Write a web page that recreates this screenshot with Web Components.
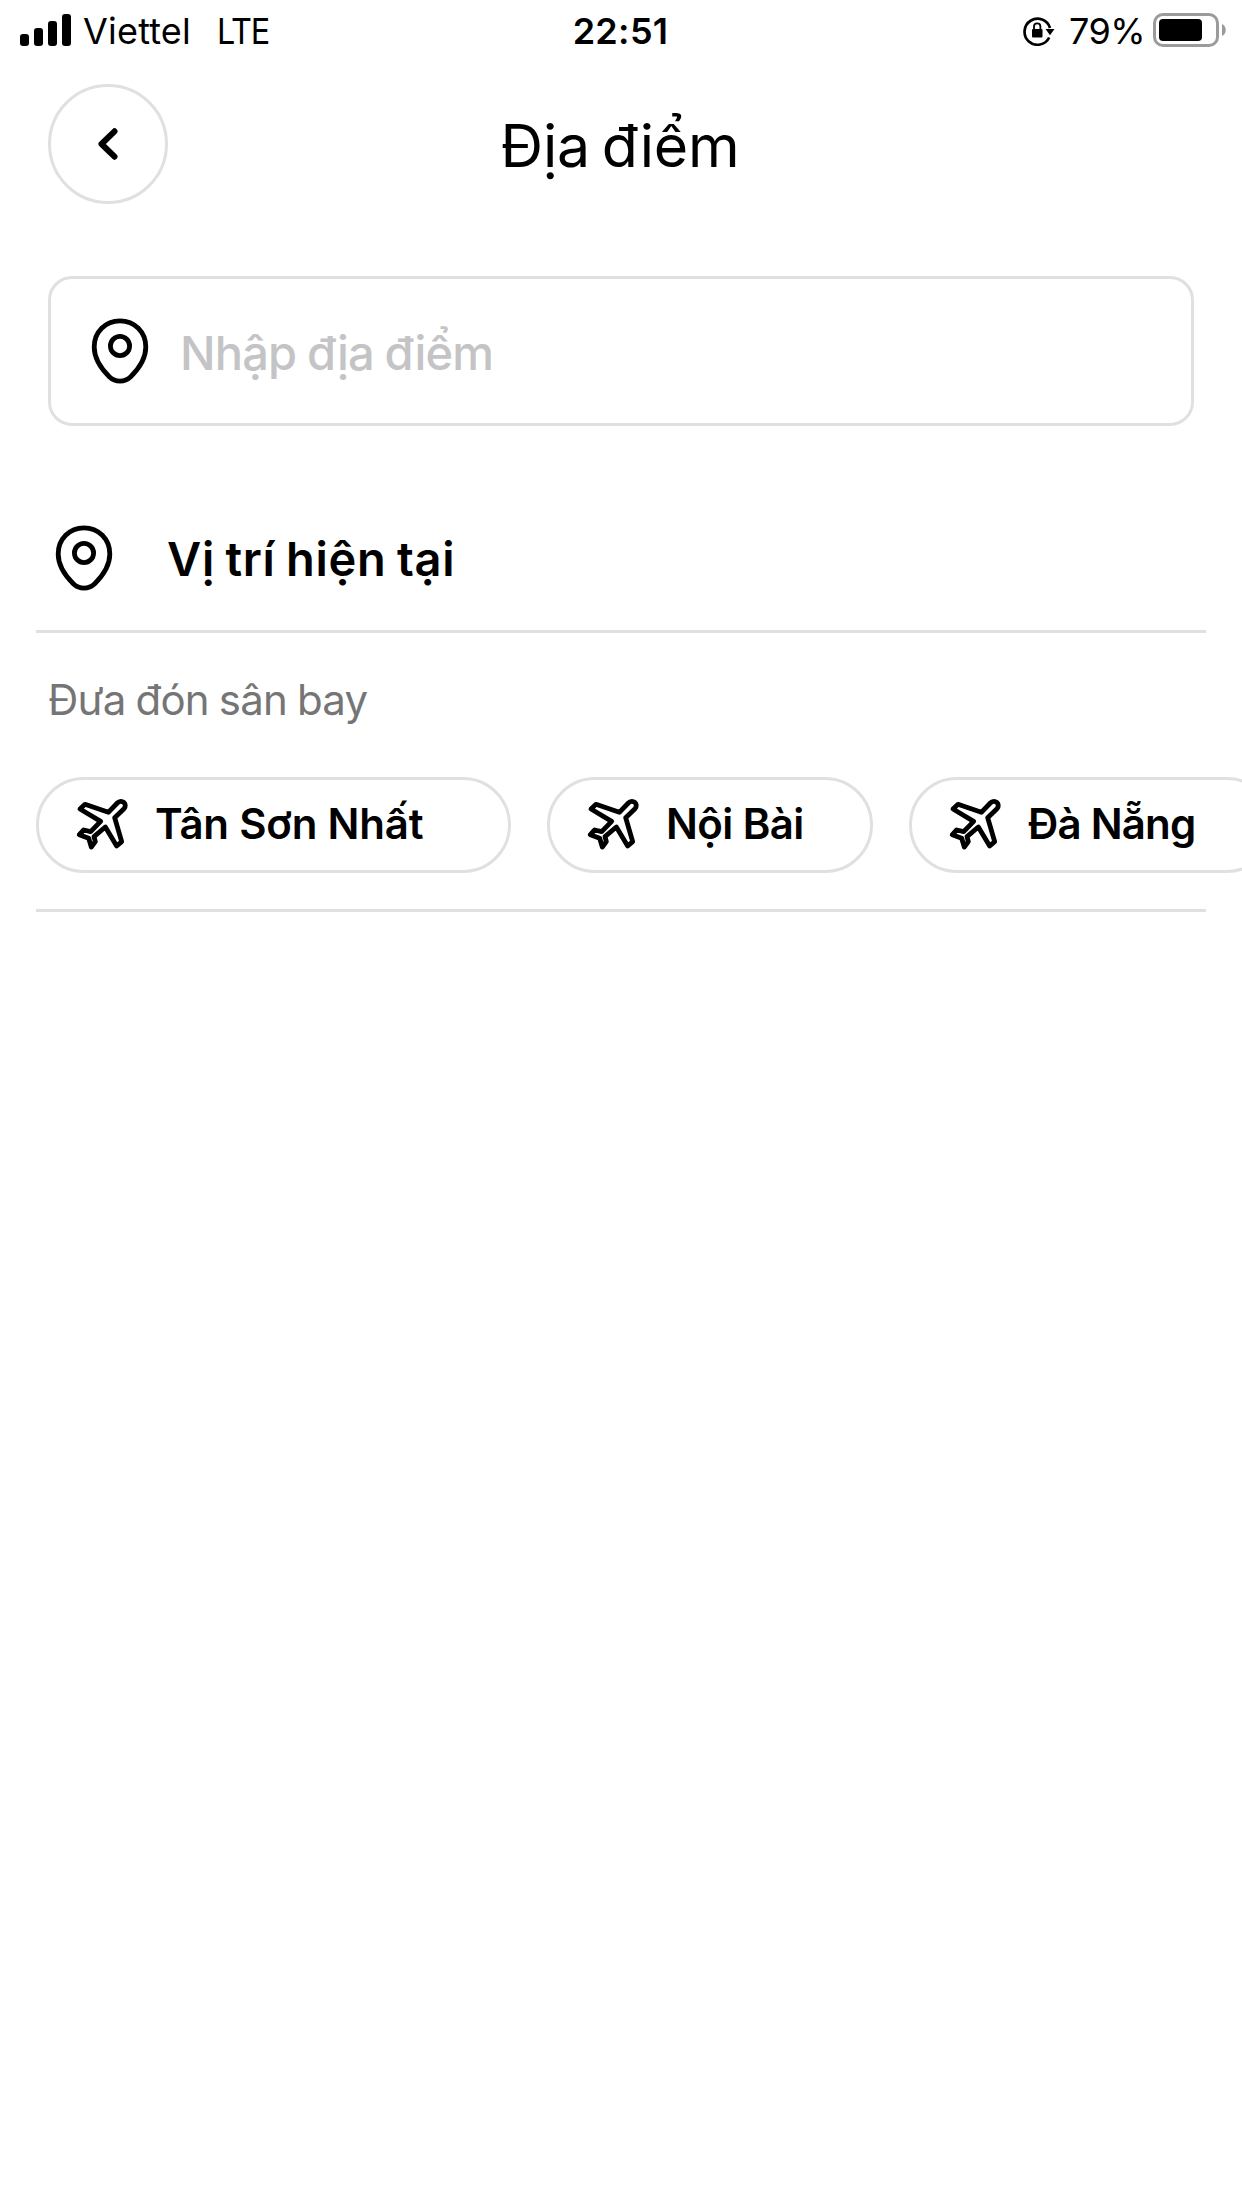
<!DOCTYPE html>
<html lang="vi">
<head>
<meta charset="utf-8">
<title>Địa điểm</title>
<style>
body{margin:0;background:#fff;color:#000;font-family:Inter,"Noto Sans",sans-serif;overflow:hidden}
</style>
</head>
<body>
<location-page></location-page>
<script>
const define=(name,html)=>customElements.define(name,class extends HTMLElement{
  constructor(){super();this.attachShadow({mode:'open'}).innerHTML=html;}
});

define('status-bar',`<style>
:host{display:grid;grid-template-columns:1fr auto 1fr;align-items:center;height:60px;font-size:36px;line-height:44px;box-sizing:border-box;padding:0 16px 0 20px}
.l,.r{display:flex;align-items:center;white-space:pre}
.r{justify-content:flex-end}
svg{display:block;flex:none}
.c{margin-left:12px;letter-spacing:.2px}
.n{margin-left:26px;letter-spacing:-1.3px;transform:scaleX(.9);transform-origin:0 50%}
.t{font-weight:600;letter-spacing:.3px;margin-right:5px}
.p{margin-left:14px;letter-spacing:-.6px}
.b{margin-left:8px}
.k{margin-top:2px}
span{position:relative;top:1px}
</style>
<div class="l"><svg width="51" height="32" viewBox="0 0 51 32"><rect y="20" width="9" height="12" rx="3"/><rect x="14" y="14" width="9" height="18" rx="3"/><rect x="28" y="7" width="9" height="25" rx="3"/><rect x="42" width="9" height="32" rx="3"/></svg><span class="c">Viettel</span><span class="n">LTE</span></div>
<span class="t">22:51</span>
<div class="r"><svg class="k" width="32" height="30" viewBox="0 0 32 30"><path d="M26.2 21.5A13 13 0 1 1 27 12" fill="none" stroke="#000" stroke-width="2.700"/><path d="M22.500 13H31.500L27 19.300Z"/><rect x="9" y="13" width="10.500" height="8.500" rx="1"/><path d="M11 13V10.500a3.200 3.200 0 0 1 6.400 0V13" fill="none" stroke="#000" stroke-width="1.800"/></svg><span class="p">79%</span>
<svg class="b" width="73" height="34" viewBox="0 0 73 34"><rect x="1.500" y="1.500" width="63" height="31" rx="8.500" fill="none" stroke="#9b9b9b" stroke-width="3"/><rect x="6" y="6" width="43" height="22" rx="4"/><path d="M69 11c5 2 5 10 0 12z" fill="#9b9b9b"/></svg></div>`);

define('back-button',`<style>
:host{display:flex;width:120px;height:120px;box-sizing:border-box;border:3px solid #e0e0e0;border-radius:50%;align-items:center;justify-content:center}
</style><svg width="24" height="36" viewBox="0 0 24 36"><path d="M18.500 5.300 5.500 18 18.500 30.700" fill="none" stroke="#000" stroke-width="6" stroke-linecap="round" stroke-linejoin="round"/></svg>`);

define('nav-header',`<style>
:host{display:grid;grid-template-columns:120px 1fr 120px;align-items:center;padding:24px 48px 0;height:120px}
h1{margin:0;text-align:center;font-weight:430;font-size:59px;line-height:72px;letter-spacing:-.2px;word-spacing:-4.5px}
h1 span{position:relative;top:2px;left:-1px}
</style><back-button></back-button><h1><span><slot></slot></span></h1>`);

define('pin-icon',`<style>:host{display:block;width:60px;height:70px}svg{display:block}</style>
<svg width="60" height="70" viewBox="0 0 60 70" fill="none" stroke="#000" stroke-width="4.8"><path d="M30 4.800C15.500 4.800 4.200 16 4.200 31C4.200 42.500 11 52.500 19.300 60.700C25.500 66.600 34.500 66.600 40.700 60.700C49 52.500 55.800 42.500 55.800 31C55.800 16 44.500 4.800 30 4.800Z"/><circle cx="30" cy="30" r="9.600"/></svg>`);

define('plane-icon',`<style>:host{display:block;width:60px;height:60px}svg{display:block}</style>
<svg width="60" height="60" viewBox="162 108 180 180" fill="none" stroke="#000" stroke-width="14.5" stroke-linejoin="round"><path d="M180 150 195 136 265 160 292 132C305 119 324 135 312 149L284 176 305 248 290 261 256 204 222 233 226 248 214 264 206 238 178 227 191 213 212 218 242 187Z"/></svg>`);

define('search-field',`<style>
:host{display:flex;align-items:center;height:150px;box-sizing:border-box;border:3px solid #e0e0e0;border-radius:24px;margin:72px 48px 0;padding-left:39px}
span{margin-left:30px;color:#c4c4c6;font-weight:450;font-size:47px;line-height:60px;letter-spacing:-.8px;word-spacing:-1px;position:relative;top:2px}
</style><pin-icon></pin-icon><span><slot></slot></span>`);

define('current-location',`<style>
:host{display:flex;align-items:center;height:204px;box-sizing:border-box;margin:0 36px;padding:60px 0 0 18px}
span{margin-left:53px;font-weight:600;font-size:47px;line-height:60px;letter-spacing:.7px;word-spacing:-2px;position:relative;top:1px}
</style><pin-icon></pin-icon><span><slot></slot></span>`);

define('divider-line',`<style>:host{display:block;height:3px;margin:0 36px;background:#e0e0e0}</style>`);

define('section-label',`<style>
:host{display:block;margin:40px 48px 0;height:104px;font-size:42px;line-height:54px;color:#757575;letter-spacing:-.8px;word-spacing:-1px}
</style><span><slot></slot></span>`);

define('airport-chip',`<style>
:host{display:flex;flex:none;align-items:center;height:96px;box-sizing:border-box;border:3px solid #e0e0e0;border-radius:48px;padding-left:35px;width:var(--w)}
span{margin-left:21px;padding-bottom:2px;font-weight:600;font-size:42px;line-height:54px;letter-spacing:var(--ls);white-space:nowrap}
</style><plane-icon></plane-icon><span><slot></slot></span>`);

define('chip-row',`<style>:host{display:flex;gap:36px;padding:0 0 36px 36px;overflow:hidden}</style><slot></slot>`);

define('location-page',`<style>:host{display:block;width:1242px;height:2208px;background:#fff;overflow:hidden}</style>
<status-bar></status-bar>
<nav-header>Địa điểm</nav-header>
<search-field>Nhập địa điểm</search-field>
<current-location>Vị trí hiện tại</current-location>
<divider-line></divider-line>
<section-label>Đưa đón sân bay</section-label>
<chip-row><airport-chip style="--w:475px;--ls:-.2px">Tân Sơn Nhất</airport-chip><airport-chip style="--w:326px;--ls:-.6px">Nội Bài</airport-chip><airport-chip style="--w:366px;--ls:-.8px">Đà Nẵng</airport-chip></chip-row>
<divider-line></divider-line>`);
</script>
</body>
</html>
